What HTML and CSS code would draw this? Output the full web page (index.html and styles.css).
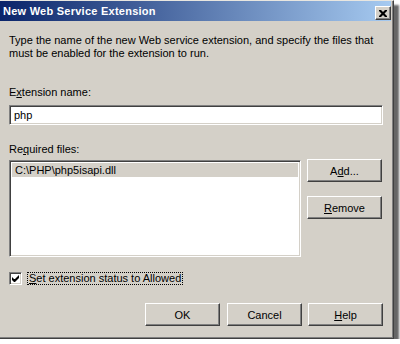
FILE: index.html
```html
<!DOCTYPE html>
<html lang="en">
<head>
  <meta charset="UTF-8" />
  <title>New Web Service Extension</title>
  <link rel="stylesheet" href="styles.css">
</head>
<body>
  <div class="dialog">
    <div class="titlebar">
      <span class="title">New Web Service Extension</span>
      <span class="close-btn">
        <svg width="8" height="7" viewBox="0 0 8 7"><path d="M0 0h2l2 2 2-2h2v1l-2.5 2.5 2.5 2.5v1h-2l-2-2-2 2h-2v-1l2.5-2.5-2.5-2.5z" fill="#000"/></svg>
      </span>
    </div>

    <div class="content">
      <p class="intro">Type the name of the new Web service extension, and specify the files that<br />must be enabled for the extension to run.</p>

      <div class="label label-name">E<u>x</u>tension name:</div>
      <div class="textbox">php</div>

      <div class="label label-files">Re<u>q</u>uired files:</div>
      <div class="files-row">
        <div class="listbox">
          <div class="list-item selected">C:\PHP\php5isapi.dll</div>
        </div>
        <div class="side-buttons">
          <span class="btn">A<u>d</u>d...</span>
          <span class="btn"><u>R</u>emove</span>
        </div>
      </div>

      <div class="check-row">
        <span class="checkbox">
          <svg width="7" height="7" viewBox="0 0 7 7"><path d="M0 2v3l2 2h1l4-4v-3l-4 4h-1z" fill="#000"/></svg>
        </span>
        <span class="check-label"><u>S</u>et extension status to Allowed</span>
      </div>

      <div class="actions">
        <span class="btn">OK</span>
        <span class="btn">Cancel</span>
        <span class="btn"><u>H</u>elp</span>
      </div>
    </div>
  </div>
</body>
</html>
```

FILE: styles.css
```css
body {
  margin: 0;
  background: #fff;
  font-family: 'Liberation Sans', Arial, sans-serif;
  font-size: 11px;
  color: #000;
}

.dialog {
  box-sizing: border-box;
  width: 394px;
  height: 339px;
  background: #d4d0c8;
  border-top: 1px solid #e8e6e0;
  border-right: 1px solid #404040;
  border-bottom: 1px solid #404040;
  padding: 0 2px 2px 0;
  box-shadow: inset -1px -1px 0 #808080, 5px 5px 2px rgba(0,0,0,0.6);
}

/* title bar */
.titlebar {
  height: 20px;
  display: flex;
  align-items: center;
  justify-content: space-between;
  padding: 0 0 0 3px;
  background: linear-gradient(to right, #0a246a, #a6caf0);
}
.title {
  color: #fff;
  font-weight: bold;
  font-size: 11px;
  letter-spacing: 0.25px;
}
.close-btn {
  box-sizing: border-box;
  width: 16px;
  height: 14px;
  margin: 4px 0 0 0;
  display: flex;
  align-items: center;
  justify-content: center;
  background: #d4d0c8;
  border-top: 1px solid #fff;
  border-left: 1px solid #fff;
  border-right: 1px solid #404040;
  border-bottom: 1px solid #404040;
  box-shadow: inset -1px -1px 0 #808080;
}

/* body */
.content {
  padding: 13px 0 0 9px;
}
.intro {
  margin: 0;
  line-height: 13px;
}
.label {
  line-height: 13px;
}
.label-name {
  margin-top: 26px;
}
.label-files {
  margin-top: 18px;
}

.textbox {
  box-sizing: border-box;
  width: 374px;
  height: 20px;
  margin-top: 6px;
  padding: 3px 0 0 4px;
  background: #fff;
  border-top: 1px solid #808080;
  border-left: 1px solid #808080;
  border-right: 1px solid #fff;
  border-bottom: 1px solid #fff;
  box-shadow: inset 1px 1px 0 #404040, inset -1px -1px 0 #d4d0c8;
}

.files-row {
  display: flex;
  gap: 6px;
  margin-top: 3px;
}
.listbox {
  box-sizing: border-box;
  width: 292px;
  height: 97px;
  margin-top: 1px;
  padding: 2px;
  background: #fff;
  border-top: 1px solid #808080;
  border-left: 1px solid #808080;
  border-right: 1px solid #fff;
  border-bottom: 1px solid #fff;
  box-shadow: inset 1px 1px 0 #404040, inset -1px -1px 0 #d4d0c8;
}
.list-item {
  height: 14px;
  line-height: 14px;
  padding-left: 3px;
}
.list-item.selected {
  background: #d4d0c8;
}
.side-buttons {
  display: flex;
  flex-direction: column;
  gap: 14px;
}

/* buttons */
.btn {
  box-sizing: border-box;
  width: 75px;
  height: 23px;
  display: flex;
  align-items: center;
  justify-content: center;
  background: #d4d0c8;
  border-top: 1px solid #fff;
  border-left: 1px solid #fff;
  border-right: 1px solid #404040;
  border-bottom: 1px solid #404040;
  box-shadow: inset -1px -1px 0 #808080;
}

/* checkbox */
.check-row {
  display: flex;
  align-items: center;
  gap: 5px;
  margin-top: 15px;
  height: 13px;
}
.checkbox {
  box-sizing: border-box;
  width: 13px;
  height: 13px;
  display: flex;
  align-items: center;
  justify-content: center;
  background: #fff;
  border-top: 1px solid #808080;
  border-left: 1px solid #808080;
  border-right: 1px solid #fff;
  border-bottom: 1px solid #fff;
  box-shadow: inset 1px 1px 0 #404040, inset -1px -1px 0 #d4d0c8;
}
.check-label {
  line-height: 11px;
  padding: 0 1px;
  border: 1px dotted #000;
}

.actions {
  display: flex;
  gap: 6px;
  margin-top: 18px;
  padding-left: 136px;
}
.actions .btn:first-child {
  margin-right: 1px;
}
```
